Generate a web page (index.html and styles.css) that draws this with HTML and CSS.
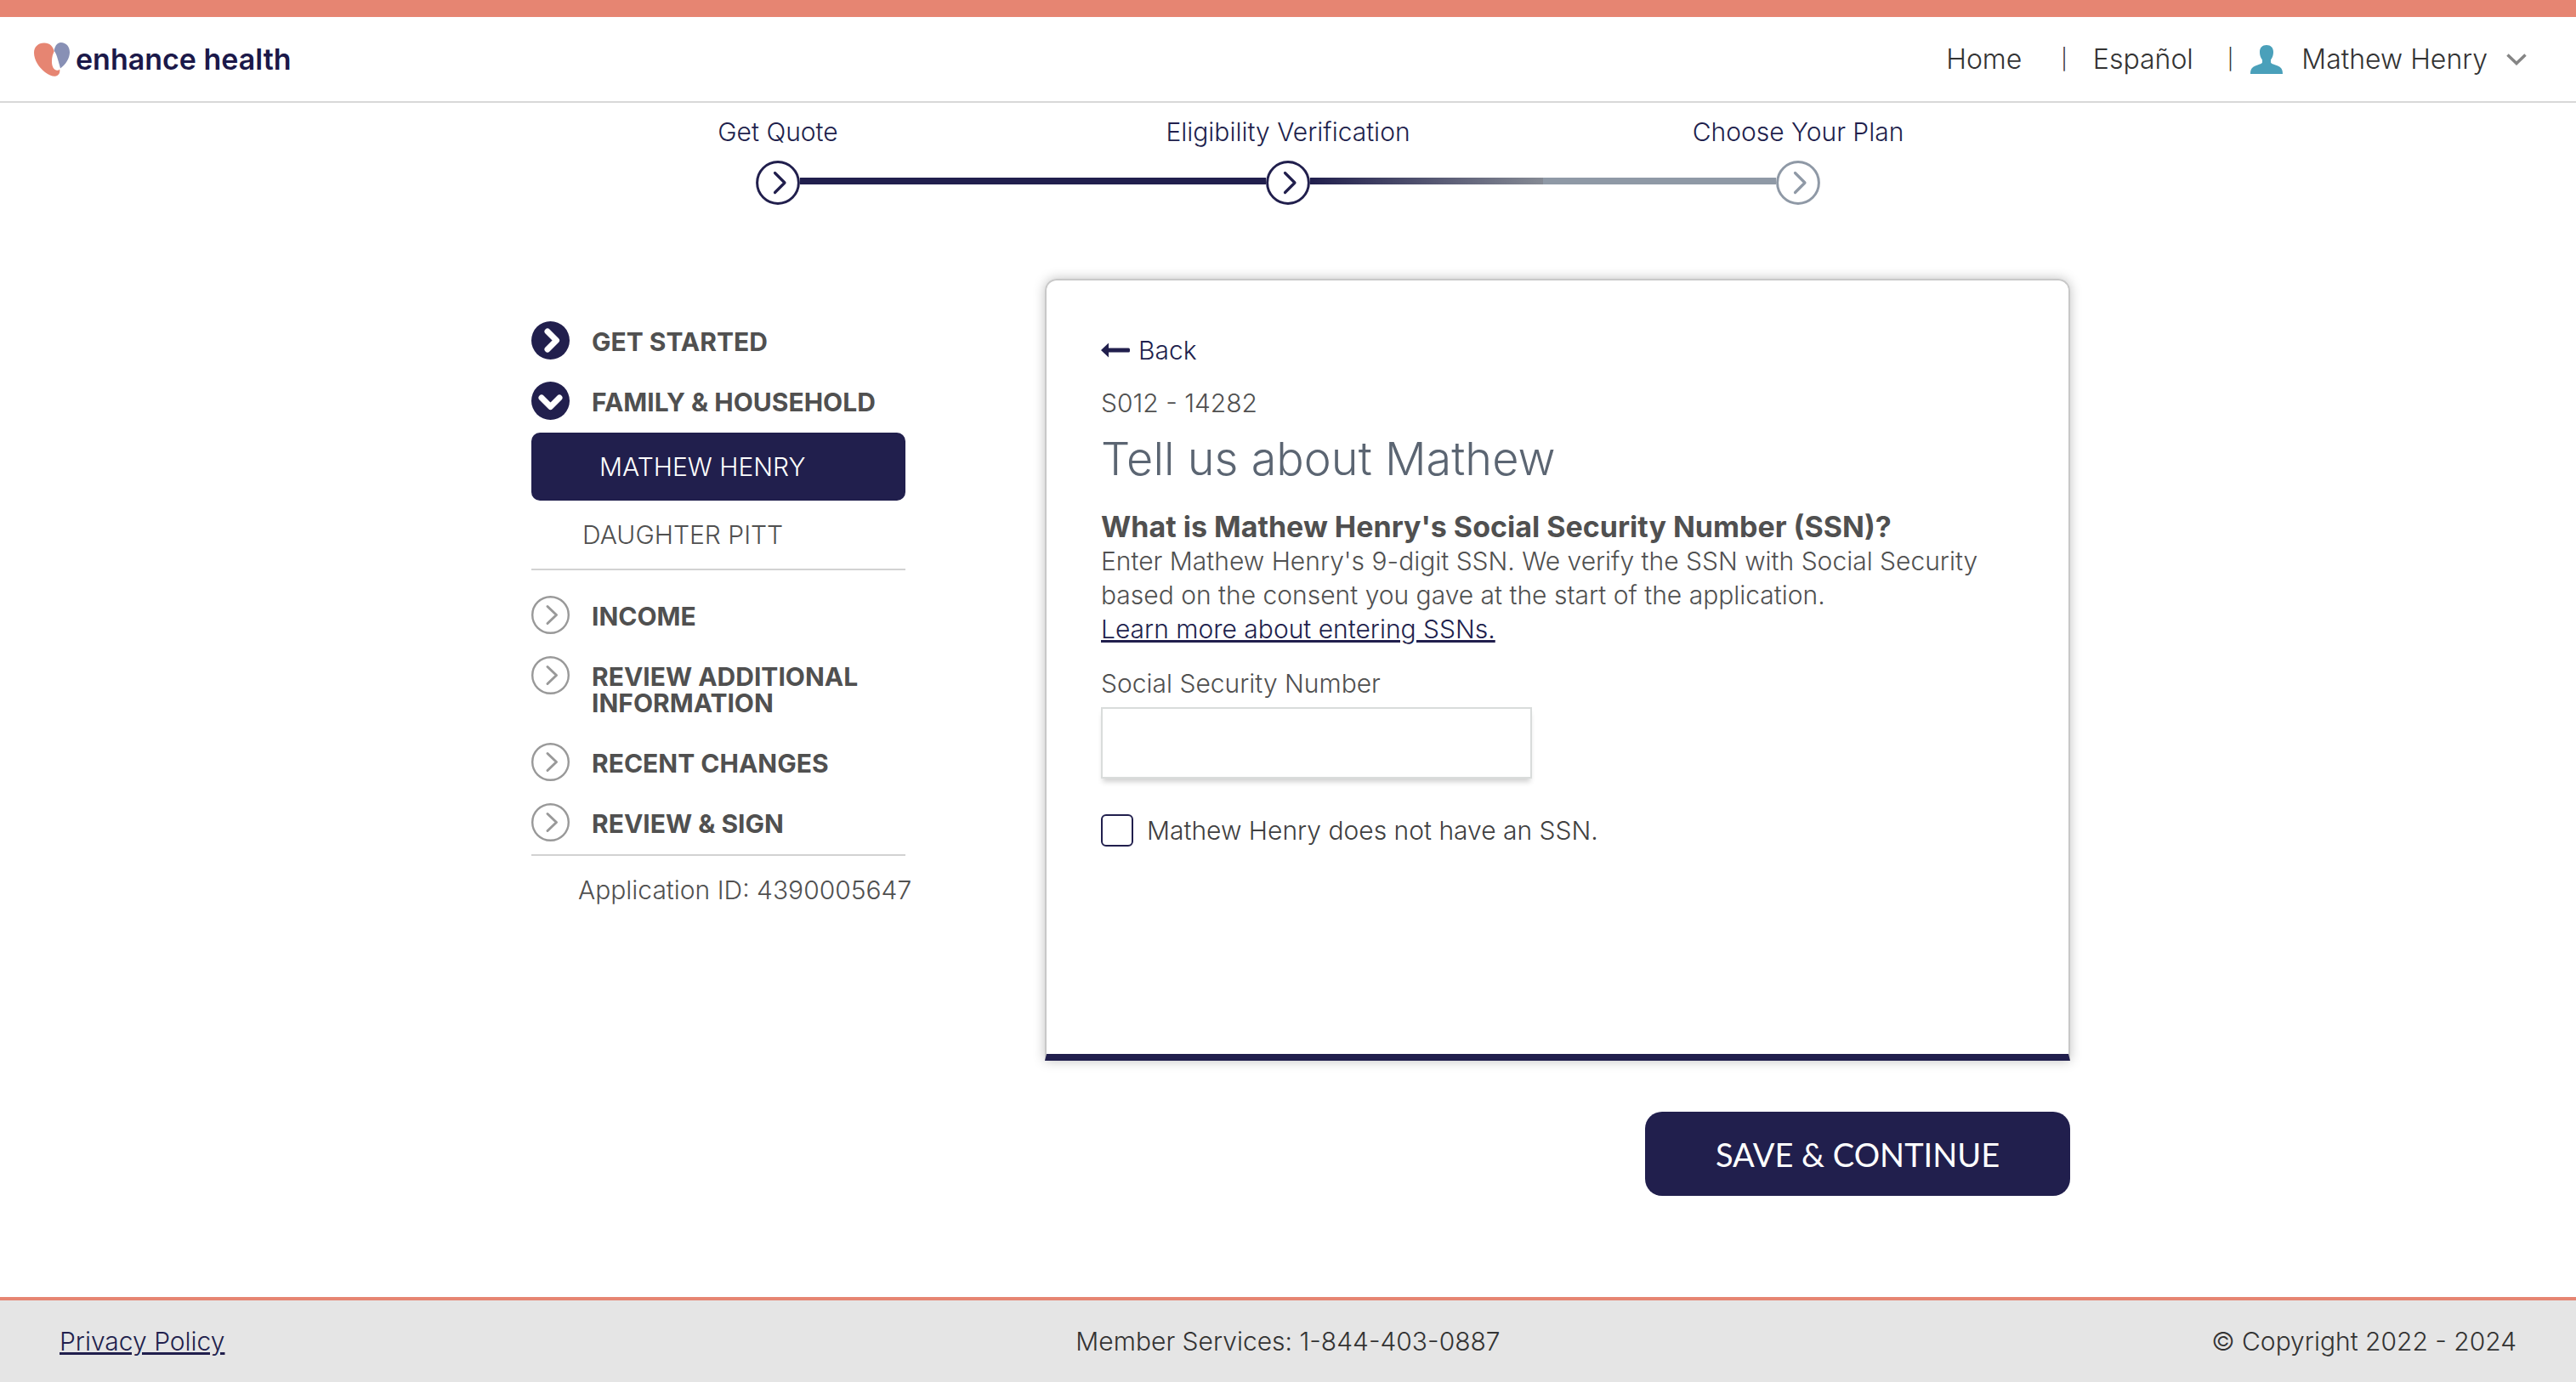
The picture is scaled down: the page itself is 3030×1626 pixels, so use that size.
FILE: index.html
```html
<!DOCTYPE html>
<html lang="en">
<head>
<meta charset="utf-8">
<meta name="viewport" content="width=device-width, initial-scale=1">
<title>Enhance Health</title>
<link rel="stylesheet" href="styles.css">
</head>
<body>
<svg class="sprite" aria-hidden="true">
  <symbol id="ring" viewBox="0 0 45 45">
    <circle cx="22.5" cy="22.5" r="21.3" fill="none" stroke="currentColor" stroke-width="2.4"/>
    <path d="M19 12.5 29.5 22.5 19 32.5" fill="none" stroke="currentColor" stroke-width="3" stroke-linecap="round" stroke-linejoin="round"/>
  </symbol>
  <symbol id="disc" viewBox="0 0 45 45">
    <circle cx="22.5" cy="22.5" r="22.5" fill="currentColor"/>
    <path d="M19 12 29.5 22.5 19 33" fill="none" stroke="#fff" stroke-width="7" stroke-linecap="round" stroke-linejoin="round"/>
  </symbol>
  <symbol id="step" viewBox="0 0 52 52">
    <circle cx="26" cy="26" r="24.4" fill="#fff" stroke="currentColor" stroke-width="3"/>
    <path d="M22.5 14.5 34 26 22.5 37.5" fill="none" stroke="currentColor" stroke-width="3.2" stroke-linecap="round" stroke-linejoin="round"/>
  </symbol>
</svg>

<header class="header">
  <a class="logo" href="#">
    <svg class="logo-mark" viewBox="0 0 42 40" aria-hidden="true">
      <path fill="#e68572" d="M12 0.5C5 0.5 0 5 0 12c0 9 6 17.500 13 23 4 3.200 8 4.700 11.500 4.700 4 0 6.500-3.500 5.700-8.200-1 1.200-2.600 1.600-4.200 1.100-3.600-1.200-5.200-5.600-5-11 .1-4.500 1.100-8 2.700-11.100C22.500 4.500 18.500.5 12 .5z"/>
      <path fill="#8890b5" d="M31.500 0C27.500 0 25 3.500 23.600 9.500 24.500 11 26 13 27 16.500c1.600 5 2.800 9.500 4 14C37.500 25.500 42 18.500 42 11.500 42 5 38 0 31.500 0z"/>
    </svg>
    <span>enhance health</span>
  </a>
  <nav class="nav">
    <a href="#">Home</a>
    <span class="divider">|</span>
    <a href="#">Español</a>
    <span class="divider">|</span>
    <button class="user" type="button">
      <svg class="person" viewBox="0 0 38 34" aria-hidden="true"><path fill="#4aa0ba" d="M19 0c-5 0-8 3-8 8 0 5 1.500 7 3 9.500V20c0 2-3 2.500-7 4-5 2-7 4-7 10h38c0-6-2-8-7-10-4-1.500-7-2-7-4v-2.500c1.500-2.500 3-4.500 3-9.500 0-5-3-8-8-8z"/></svg>
      <span>Mathew Henry</span>
      <svg class="caret" viewBox="0 0 24 14" aria-hidden="true"><path fill="none" stroke="#858585" stroke-width="3.500" d="M1.500 1.500 12 11.500 22.500 1.500"/></svg>
    </button>
  </nav>
</header>

<ol class="stepper">
  <li class="step"><span>Get Quote</span><svg class="step-icon"><use href="#step"/></svg></li>
  <li class="step done"><span>Eligibility Verification</span><svg class="step-icon"><use href="#step"/></svg></li>
  <li class="step upcoming"><span>Choose Your Plan</span><svg class="step-icon"><use href="#step"/></svg></li>
</ol>

<main class="main">
  <aside class="sidebar">
    <ul class="sections">
      <li><a class="section" href="#"><svg class="icon active"><use href="#disc"/></svg><span>GET STARTED</span></a></li>
      <li><a class="section" href="#"><svg class="icon active open"><use href="#disc"/></svg><span>FAMILY &amp; HOUSEHOLD</span></a></li>
    </ul>
    <ul class="members">
      <li><a class="member current" href="#">MATHEW HENRY</a></li>
      <li><a class="member" href="#">DAUGHTER PITT</a></li>
    </ul>
    <ul class="sections later">
      <li><a class="section" href="#"><svg class="icon"><use href="#ring"/></svg><span>INCOME</span></a></li>
      <li><a class="section" href="#"><svg class="icon"><use href="#ring"/></svg><span>REVIEW ADDITIONAL INFORMATION</span></a></li>
      <li><a class="section" href="#"><svg class="icon"><use href="#ring"/></svg><span>RECENT CHANGES</span></a></li>
      <li><a class="section" href="#"><svg class="icon"><use href="#ring"/></svg><span>REVIEW &amp; SIGN</span></a></li>
    </ul>
    <p class="app-id">Application ID: 4390005647</p>
  </aside>

  <form class="form">
    <section class="card">
      <a class="back" href="#"><svg class="arrow" viewBox="0 0 34 18" aria-hidden="true"><path fill="currentColor" d="M0 9 9 .5V6.500H32.500a1.500 1.500 0 0 1 1.500 1.500v2a1.500 1.500 0 0 1-1.500 1.500H9V17.500z"/></svg>Back</a>
      <p class="code">S012 - 14282</p>
      <h1>Tell us about Mathew</h1>
      <h2>What is Mathew Henry's Social Security Number (SSN)?</h2>
      <p class="help">Enter Mathew Henry's 9-digit SSN. We verify the SSN with Social Security<br>based on the consent you gave at the start of the application.<br><a href="#">Learn more about entering SSNs.</a></p>
      <label class="label" for="ssn">Social Security Number</label>
      <input class="field" id="ssn" type="text">
      <div class="check">
        <input class="box" id="no-ssn" type="checkbox">
        <label for="no-ssn">Mathew Henry does not have an SSN.</label>
      </div>
    </section>
    <button class="save" type="submit">SAVE &amp; CONTINUE</button>
  </form>
</main>

<footer class="footer">
  <a href="#">Privacy Policy</a>
  <span>Member Services: 1-844-403-0887</span>
  <span class="copyright">© Copyright 2022 - 2024</span>
</footer>
</body>
</html>
```
FILE: styles.css
```css
:root {
  --navy: #211f4d;
  --coral: #e68572;
  --text: #505050;
  --line: #d2d2d2;
}

* { box-sizing: border-box; }

body {
  margin: 0;
  min-height: 100vh;
  display: flex;
  flex-direction: column;
  background: #fff;
  color: var(--text);
  font: 300 30px/40px Inter, "Open Sans", sans-serif;
}

h1, h2, p, ul, ol { margin: 0; padding: 0; }
ul, ol { list-style: none; }
a { color: inherit; text-decoration: none; }
button, input { font: inherit; margin: 0; }
.sprite { display: none; }

.header {
  display: flex;
  justify-content: space-between;
  align-items: center;
  height: 121px;
  padding: 0 58px 0 40px;
  border-top: 20px solid var(--coral);
  border-bottom: 2px solid #d8d8d8;
}

.logo {
  display: flex;
  align-items: center;
  gap: 7px;
  color: #1b1849;
  font-size: 34px;
  font-weight: 600;
}

.logo-mark { width: 42px; height: 40px; }

.nav {
  display: flex;
  align-items: center;
  color: #333;
  font-size: 32px;
}

.divider { margin: 0 30px 0 46px; font-size: 24px; }
.divider:last-of-type { margin: 0 20px 0 40px; }

.user {
  display: flex;
  align-items: center;
  gap: 22px;
  padding: 0;
  border: 0;
  background: none;
  color: inherit;
}

.person { width: 38px; height: 34px; }
.caret { width: 24px; height: 14px; }

.stepper {
  display: grid;
  grid-template-columns: repeat(3, 600px);
  justify-content: center;
  padding-top: 14px;
  color: var(--navy);
}

.step {
  position: relative;
  display: flex;
  flex-direction: column;
  align-items: center;
  gap: 14px;
}

.step-icon { width: 52px; height: 52px; color: var(--navy); }

.step + .step::before {
  content: "";
  position: absolute;
  right: calc(50% + 26px);
  bottom: 24px;
  width: calc(100% - 52px);
  height: 8px;
  background: var(--navy);
}

.step.upcoming::before {
  background: linear-gradient(90deg, var(--navy), #858a94 50%, #8f99a6 50%);
}

.upcoming .step-icon { color: #8f99a6; }

.main {
  display: grid;
  grid-template-columns: 460px 1206px;
  justify-content: space-between;
  width: 100%;
  max-width: 1840px;
  margin: 0 auto;
  padding: 87px 0 119px 30px;
}

.sidebar { padding-top: 50px; }

.sections {
  display: grid;
  gap: 26px;
  width: 440px;
  padding-bottom: 15px;
}

.sections.later {
  padding-top: 30px;
  border-bottom: 2px solid var(--line);
}

.section {
  display: flex;
  align-items: flex-start;
  gap: 26px;
  font-weight: 700;
  line-height: 31px;
}

.section span { flex: 1; padding: 9px 0 5px; }

.icon { flex: none; width: 45px; height: 45px; color: #999; }
.icon.active { color: var(--navy); }
.icon.open { transform: rotate(90deg); }

.members { width: 440px; border-bottom: 2px solid var(--line); }

.member { display: block; padding: 20px 60px; }

.member.current {
  padding: 20px 80px;
  border-radius: 10px;
  background: var(--navy);
  color: #fff;
}

.app-id { padding: 20px 0 0 55px; white-space: nowrap; }

.form { display: flex; flex-direction: column; align-items: flex-end; gap: 60px; }

.card {
  width: 100%;
  min-height: 920px;
  padding: 60px 64px;
  border: 2px solid #c8c8c8;
  border-bottom: 8px solid var(--navy);
  border-radius: 14px 14px 0 0;
  box-shadow: 0 0 14px rgba(0, 0, 0, 0.25);
}

.back { display: inline-flex; align-items: center; gap: 10px; color: var(--navy); }
.arrow { width: 34px; height: 18px; }

.code { padding-top: 22px; }

h1 {
  padding: 14px 0 28px;
  color: #5b6572;
  font-size: 54px;
  font-weight: 300;
  line-height: 64px;
}

h2 { font-size: 34px; font-weight: 700; line-height: 40px; }

.help a { color: var(--navy); text-decoration: underline; }

.label { display: block; padding: 24px 0 8px; }

.field {
  display: block;
  width: 507px;
  height: 84px;
  padding: 0 20px;
  border: 2px solid #d9dcdb;
  background: #fff;
  box-shadow: 0 6px 6px -2px rgba(0, 0, 0, 0.18);
}

.check {
  display: flex;
  align-items: center;
  gap: 16px;
  padding-top: 41px;
  color: #404040;
}

.box {
  appearance: none;
  width: 38px;
  height: 38px;
  border: 2px solid var(--navy);
  border-radius: 6px;
}

.box:checked { background: var(--navy); }

.save {
  width: 500px;
  height: 99px;
  border: 0;
  border-radius: 20px;
  background: var(--navy);
  color: #fff;
  font: 400 38px/44px Lato, sans-serif;
}

.footer {
  display: grid;
  grid-template-columns: 1fr auto 1fr;
  align-items: center;
  margin-top: auto;
  padding: 28px 70px;
  border-top: 4px solid var(--coral);
  background: #e5e5e5;
  color: #333;
}

.footer a { justify-self: start; color: var(--navy); text-decoration: underline; }
.copyright { text-align: right; }
```
